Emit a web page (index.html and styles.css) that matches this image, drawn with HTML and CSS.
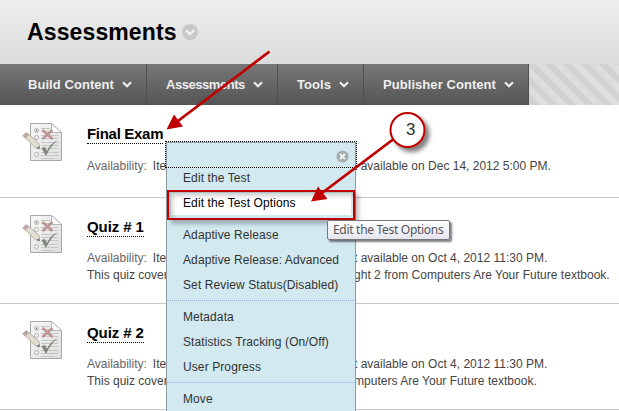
FILE: index.html
```
<!DOCTYPE html>
<html lang="en">
<head>
<meta charset="utf-8">
<title>Assessments</title>
<link rel="stylesheet" href="styles.css">
</head>
<body>
<svg class="defs" width="0" height="0" aria-hidden="true">
  <defs>
    <linearGradient id="paper" x1="0" y1="0" x2="1" y2="1"><stop offset="0" stop-color="#f7f7f7"/><stop offset="1" stop-color="#dedede"/></linearGradient>
    <filter id="shadow" x="-30%" y="-30%" width="180%" height="180%"><feDropShadow dx="4" dy="4" stdDeviation="2" flood-color="#000" flood-opacity=".5"/></filter>
    <symbol id="test" viewBox="0 0 42 42">
      <path d="M9.500 2.500h21l10 9v28h-31z" fill="url(#paper)" stroke="#a8a8a8"/>
      <path d="M30.500 2.500v9h10z" fill="#fff" stroke="#b5b5b5"/>
      <g stroke="#c6c6c6"><path d="M20 7.500h9M20 10.500h10M20 14.500h17M20 17.500h17M20 21.500h17M20 24.500h17M20 27.500h17M20 31.500h17M20 34.500h17M20 37.500h13"/></g>
      <g fill="#f8f8f8" stroke="#b0b0b0"><circle cx="15.500" cy="9.500" r="2"/><circle cx="15.500" cy="16.500" r="2"/><circle cx="15.500" cy="33.500" r="2"/></g>
      <circle cx="15.500" cy="9.500" r=".8" fill="#666"/>
      <path d="M21.500 9l10 9M31.500 9l-10 9" stroke="#bd9494" stroke-width="2.500"/>
      <path d="M20.500 27l3.500-1 2 4Q29 23 36.500 19Q29 26 25 35z" fill="#7c8579"/>
      <path d="M1.500 15l3.500-3.500 3 2-3 4z" fill="#bda7a0" stroke="#aaa" stroke-width=".6"/>
      <path d="M4.500 17l3.500-3.500 10 9 .5 5-4.500-1z" fill="#e2ddd0" stroke="#aaa79e" stroke-width=".8"/>
      <path d="M15.500 27l3-2v3.500z" fill="#777"/>
    </symbol>
    <symbol id="chevron" viewBox="0 0 10 7"><path d="M1 1.200l4 4 4-4" fill="none" stroke="currentColor" stroke-width="2.200"/></symbol>
  </defs>
</svg>
<header class="title-bar">
  <h1>Assessments</h1>
  <span class="title-menu"><svg width="10" height="7"><use href="#chevron"/></svg></span>
</header>
<nav class="action-bar">
  <a class="build">Build Content<svg width="10" height="7"><use href="#chevron"/></svg></a>
  <a class="assess">Assessments<svg width="10" height="7"><use href="#chevron"/></svg></a>
  <a class="tools">Tools<svg width="10" height="7"><use href="#chevron"/></svg></a>
  <a class="publisher">Publisher Content<svg width="10" height="7"><use href="#chevron"/></svg></a>
</nav>
<main>
  <article class="first">
    <svg class="icon" width="42" height="42"><use href="#test"/></svg>
    <div class="content">
      <h2>Final Exam</h2>
      <p><span class="lead"><span class="label">Availability:</span>Item</span><span class="date">t available on Dec 14, 2012 5:00 PM.</span></p>
    </div>
  </article>
  <article>
    <svg class="icon" width="42" height="42"><use href="#test"/></svg>
    <div class="content">
      <h2>Quiz # 1</h2>
      <p><span class="lead"><span class="label">Availability:</span>Item</span><span class="date">t available on Oct 4, 2012 11:30 PM.</span></p>
      <p><span class="lead">This quiz covers</span><span class="book">ght 2 from Computers Are Your Future textbook.</span></p>
    </div>
  </article>
  <article>
    <svg class="icon" width="42" height="42"><use href="#test"/></svg>
    <div class="content">
      <h2>Quiz # 2</h2>
      <p><span class="lead"><span class="label">Availability:</span>Item</span><span class="date">t available on Oct 4, 2012 11:30 PM.</span></p>
      <p><span class="lead">This quiz covers</span><span class="book">mputers Are Your Future textbook.</span></p>
    </div>
  </article>
</main>
<div class="menu">
  <div class="menu-head"><svg width="13" height="13" viewBox="0 0 13 13"><circle cx="6.500" cy="6.500" r="6" fill="#aaa"/><path d="M4 4l5 5M9 4l-5 5" stroke="#e8f3f5" stroke-width="2"/></svg></div>
  <ul><li>Edit the Test</li><li class="active">Edit the Test Options</li></ul>
  <ul><li>Adaptive Release</li><li>Adaptive Release: Advanced</li><li>Set Review Status(Disabled)</li></ul>
  <ul><li>Metadata</li><li>Statistics Tracking (On/Off)</li><li>User Progress</li></ul>
  <ul><li>Move</li></ul>
</div>
<div class="focus"></div>
<div class="highlight"></div>
<div class="tooltip">Edit the Test Options</div>
<svg class="marks" width="619" height="411">
  <g stroke="#c00000" fill="#c00000">
    <path d="M269.500 51.500L178 121" stroke-width="2.800"/>
    <path d="M166.500 129.500l7.500-15 9 12z" stroke="none"/>
    <path d="M393 139.500L322 193" stroke-width="2.800"/>
    <path d="M311 201.500l7-15 9.500 12.500z" stroke="none"/>
  </g>
  <circle cx="407.500" cy="130" r="17" fill="#fff" stroke="#c00000" stroke-width="2" filter="url(#shadow)"/>
  <text x="406" y="135">3</text>
</svg>
</body>
</html>
```
FILE: styles.css
```
* { box-sizing: border-box; }
body { margin: 0; width: 619px; height: 411px; overflow: hidden; position: relative; background: #fff; color: #444; font: 12px/17px "Liberation Sans", Arial, sans-serif; }
h1, h2, p, ul { margin: 0; padding: 0; }
.defs { position: absolute; }
.title-bar { height: 64px; padding-left: 27px; display: flex; align-items: center; gap: 6px; background: linear-gradient(#eee, #dcdcdc); }
h1 { color: #000; font-size: 23px; line-height: 26px; width: 149px; white-space: nowrap; letter-spacing: .12px; }
.title-menu { width: 16px; height: 16px; border-radius: 50%; background: #c8c8c8; color: #f4f4f4; display: flex; align-items: center; justify-content: center; }
.action-bar { height: 41px; display: flex; background: repeating-linear-gradient(45deg, #dedede 0 6.400px, #d2d2d2 6.400px 12.730px); }
.action-bar a { display: flex; align-items: center; justify-content: space-between; padding: 0 14px 0 19px; border-right: 1px solid #505050; background: linear-gradient(#777, #555); color: #eee; font-size: 13px; letter-spacing: .06px; font-weight: bold; white-space: nowrap; }
.action-bar svg { flex: none; }
.action-bar .build { width: 147px; padding-left: 28px; }
.action-bar .assess { width: 131px; letter-spacing: -.45px; }
.action-bar .tools { width: 86px; }
.action-bar .publisher { width: 165px; }
article { height: 106px; display: flex; padding: 15px 0 0 21px; border-bottom: 1px solid #c8c8c8; }
article.first { height: 93px; }
.first .icon { margin-top: 1px; }
.icon { flex: none; }
.content { margin-left: 24px; flex: 1; padding-top: 5px; }
.first .content { padding-top: 5px; }
h2 { display: block; width: fit-content; height: 19px; color: #000; font-size: 15px; line-height: 17px; letter-spacing: -.3px; border-bottom: 1px dotted #000; white-space: nowrap; }
.content p { display: flex; white-space: nowrap; }
h2 + p { margin-top: 13px; }
.first h2 + p { margin-top: 14px; }
article:not(.first) h2 { letter-spacing: -.1px; }
.lead { width: 267px; }
.lead, .date, .book { flex: none; }
.book { letter-spacing: .02px; }
.label { color: #666; margin-right: 6px; }
.menu { position: absolute; left: 166px; top: 142px; width: 190px; height: 280px; border: 1px solid #8e9b9f; background: #d1e9ef; color: #333; }
.menu-head { height: 22px; display: flex; align-items: center; justify-content: flex-end; padding: 4px 6px 0 0; }
.menu ul { list-style: none; padding: 3px 0; border-bottom: 1px dotted #9bb4dc; }
.menu ul:first-of-type { padding-top: 0; }
.menu li { height: 25px; padding-left: 16px; line-height: 27px; letter-spacing: .1px; white-space: nowrap; }
.menu .active { color: #000; background: linear-gradient(#fff, #fff) 4px 3px / 180px 22px no-repeat; }
.focus { position: absolute; left: 165px; top: 141px; width: 192px; height: 27px; border: 1px dotted #000; }
.highlight { position: absolute; left: 167px; top: 190px; width: 188px; height: 30px; border: 2px solid #c00000; box-shadow: 4px 4px 4px rgba(0,0,0,.25), inset 4px 4px 4px rgba(0,0,0,.18); }
.tooltip { position: absolute; left: 327px; top: 220px; width: 123px; height: 20px; border: 1px solid #777; border-radius: 2px; background: linear-gradient(#fff, #e4e5f0); box-shadow: 2px 2px 2px rgba(0,0,0,.5); color: #555; font: 12px/18px "Noto Sans", sans-serif; padding-left: 5px; white-space: nowrap; letter-spacing: -.3px; }
.marks { position: absolute; left: 0; top: 0; }
.marks text { font: 17px "Liberation Sans", sans-serif; fill: #333; }
```
